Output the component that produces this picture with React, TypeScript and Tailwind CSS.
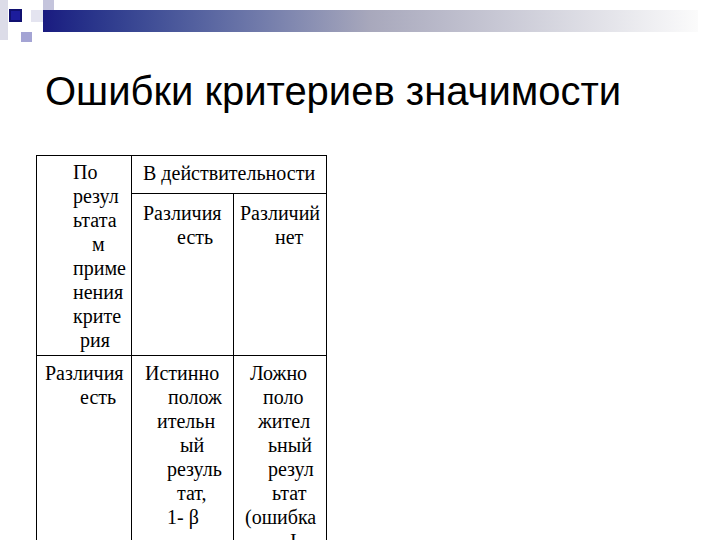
import React from "react";

type L = { t: string; p: number };

function Lines({ lines }: { lines: L[] }) {
  return (
    <div className="flex flex-col">
      {lines.map((l, i) => (
        <div key={i} className="whitespace-nowrap leading-[24px]" style={{ paddingLeft: l.p }}>
          {l.t}
        </div>
      ))}
    </div>
  );
}

export default function App() {
  const col1a: L[] = [
    { t: "По", p: 36 },
    { t: "резул", p: 36 },
    { t: "ьтата", p: 36 },
    { t: "м", p: 55 },
    { t: "приме", p: 36 },
    { t: "нения", p: 36 },
    { t: "крите", p: 36 },
    { t: "рия", p: 43 },
  ];
  const c2h: L[] = [
    { t: "Различия", p: 11 },
    { t: "есть", p: 45 },
  ];
  const c3h: L[] = [
    { t: "Различий", p: 6 },
    { t: "нет", p: 41 },
  ];
  const r2c1: L[] = [
    { t: "Различия", p: 8 },
    { t: "есть", p: 43 },
  ];
  const r2c2: L[] = [
    { t: "Истинно", p: 13 },
    { t: "полож", p: 36 },
    { t: "ительн", p: 25 },
    { t: "ый", p: 48 },
    { t: "резуль", p: 35 },
    { t: "тат,", p: 45 },
    { t: "1- β", p: 35 },
  ];
  const r2c3: L[] = [
    { t: "Ложно", p: 16 },
    { t: "поло", p: 29 },
    { t: "жител", p: 24 },
    { t: "ьный", p: 34 },
    { t: "резул", p: 34 },
    { t: "ьтат", p: 38 },
    { t: "(ошибка", p: 11 },
    { t: "I", p: 56 },
  ];

  return (
    <div className="w-[720px] h-[540px] overflow-hidden bg-white relative">
      {/* header decoration */}
      <div className="relative h-[45px]">
        <div className="absolute left-0 top-0 w-[8px] h-[40px] bg-[#dcdce8]" />
        <div className="absolute left-[43px] top-0 w-[11px] h-[22px] bg-[#c4c4dc]" />
        <div className="absolute left-[43px] top-[10px] w-[655px] h-[22px] bg-gradient-to-r from-[#1a1a80] via-[#a8a8bc] to-[#fbfbfb]" />
        <div className="absolute left-[31px] top-[10px] w-[12px] h-[12px] bg-[#e4e4f0]" />
        <div className="absolute left-[9px] top-[9px] w-[13px] h-[13px] bg-[#1c1c9c] border-[2px] border-[#101070]" />
        <div className="absolute left-[21px] top-[32px] w-[11px] h-[10px] bg-[#a4a4d4]" />
      </div>

      <div
        className="pl-[45px] pt-[22px] text-[40px] leading-[48px] text-black"
        style={{ fontFamily: '"Liberation Sans", Arial, sans-serif' }}
      >
        Ошибки критериев значимости
      </div>

      <div
        className="ml-[36px] mt-[40px] w-[291px] text-[20px] text-black border-l border-t border-r border-black"
        style={{ fontFamily: '"Liberation Serif", "Times New Roman", serif' }}
      >
        <div className="flex border-b border-black">
          <div className="w-[95px] shrink-0 border-r border-black pt-[4px] pb-[3px]">
            <Lines lines={col1a} />
          </div>
          <div className="flex-1 flex flex-col">
            <div className="h-[38px] border-b border-black pt-[5px] pl-[11px] whitespace-nowrap leading-[24px]">
              В действительности
            </div>
            <div className="flex flex-1">
              <div className="w-[102px] border-r border-black pt-[7px]">
                <Lines lines={c2h} />
              </div>
              <div className="flex-1 pt-[7px]">
                <Lines lines={c3h} />
              </div>
            </div>
          </div>
        </div>
        <div className="flex h-[200px]">
          <div className="w-[95px] shrink-0 border-r border-black pt-[5px]">
            <Lines lines={r2c1} />
          </div>
          <div className="w-[102px] shrink-0 border-r border-black pt-[5px]">
            <Lines lines={r2c2} />
          </div>
          <div className="flex-1 pt-[5px]">
            <Lines lines={r2c3} />
          </div>
        </div>
      </div>
    </div>
  );
}
